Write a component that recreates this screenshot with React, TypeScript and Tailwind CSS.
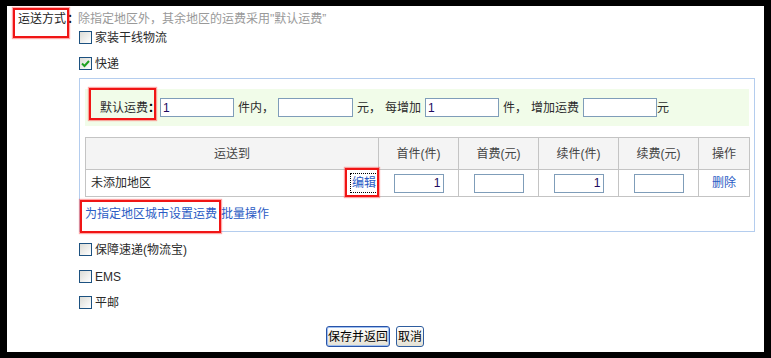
import React from 'react'

const Box = ({ checked }: { checked?: boolean }) => (
  <span className="relative w-[13px] h-[13px] border border-[#1c5180] bg-gradient-to-br from-[#dcdcd6] to-white shrink-0">
    {checked && (
      <svg className="absolute left-[1px] top-[1px]" width="9" height="9" viewBox="0 0 9 9">
        <path d="M1 4.5 L3.5 7 L8 2" stroke="#21a121" strokeWidth="2" fill="none" />
      </svg>
    )}
  </span>
)

const Option = ({ label, checked, className }: { label: string; checked?: boolean; className?: string }) => (
  <div className={`flex items-center h-[13px] ${className ?? ''}`}>
    <Box checked={checked} />
    <span className="ml-[3px] text-[12px] text-[#2b2b2b]">{label}</span>
  </div>
)

const Input = ({ value, w, right }: { value?: string; w: string; right?: boolean }) => (
  <input
    readOnly
    value={value ?? ''}
    className={`${w} h-[19px] border border-[#7f9db9] bg-white px-[2px] text-[12px] text-[#200a60] outline-none ${right ? 'text-right' : ''}`}
  />
)

// red marks drawn over the screenshot
const Mark = ({ cls }: { cls: string }) => (
  <div className={`absolute border-2 border-[#f01515] shadow-[0_0_1px_1px_rgba(255,60,60,0.45)] pointer-events-none ${cls}`} />
)

const App = () => {
  return (
    <div className="w-[771px] h-[358px] bg-black pt-[6px] pb-[6px] pl-[7px] pr-[7px] flex">
      <div className="relative flex-1 bg-white font-['Liberation_Sans','Noto_Sans_CJK_SC',sans-serif] text-[12px] text-[#2b2b2b]">
        {/* title */}
        <div className="flex items-center h-[25px] pl-[11px] pt-[1px]">
          <span className="text-[#222]">运送方式</span>
          <span className="font-bold text-black ml-[1px]">：</span>
          <span className="text-[#999] -ml-[1px]">除指定地区外，其余地区的运费采用"默认运费”</span>
        </div>

        <div className="pl-[72px]">
          <Option label="家装干线物流" />
          <Option label="快递" checked className="mt-[13px]" />

          {/* express settings */}
          <div className="mt-[8px] w-[676px] h-[154px] border border-[#b4cdee] px-[5px] pt-[10px]">
            <div className="h-[37px] bg-[#f1fce9] flex items-center pl-[15px]">
              <span>默认运费</span>
              <span className="font-bold text-black">：</span>
              <Input value="1" w="w-[74px]" />
              <span className="ml-[4px]">件内，</span>
              <span className="ml-[4px]" />
              <Input w="w-[75px]" />
              <span className="ml-[4px]">元，</span>
              <span className="ml-[4px]">每增加</span>
              <span className="ml-[4px]" />
              <Input value="1" w="w-[74px]" />
              <span className="ml-[4px]">件，</span>
              <span className="ml-[4px]">增加运费</span>
              <span className="ml-[4px]" />
              <Input w="w-[74px]" />
              <span>元</span>
            </div>

            <table className="mt-[11px] w-[664px] border-collapse table-fixed">
              <colgroup>
                <col className="w-[293px]" />
                <col className="w-[80px]" />
                <col className="w-[80px]" />
                <col className="w-[80px]" />
                <col className="w-[80px]" />
                <col className="w-[51px]" />
              </colgroup>
              <thead>
                <tr className="h-[32px] bg-[#f4f4f4]">
                  {['运送到', '首件(件)', '首费(元)', '续件(件)', '续费(元)', '操作'].map((h) => (
                    <th key={h} className="border border-[#c4c4c4] font-normal text-center p-0 text-[#444]">
                      {h}
                    </th>
                  ))}
                </tr>
              </thead>
              <tbody>
                <tr className="h-[27px]">
                  <td className="border border-[#c4c4c4] p-0">
                    <div className="flex items-center justify-between pl-[5px] pr-[1px]">
                      <span>未添加地区</span>
                      <span className="text-[#2a5bc4] outline-1 outline-dotted outline-black px-[1px] leading-[18px]">编辑</span>
                    </div>
                  </td>
                  <td className="border border-[#c4c4c4] p-0 text-center">
                    <Input value="1" w="w-[50px]" right />
                  </td>
                  <td className="border border-[#c4c4c4] p-0 text-center">
                    <Input w="w-[50px]" />
                  </td>
                  <td className="border border-[#c4c4c4] p-0 text-center">
                    <Input value="1" w="w-[50px]" right />
                  </td>
                  <td className="border border-[#c4c4c4] p-0 text-center">
                    <Input w="w-[50px]" />
                  </td>
                  <td className="border border-[#c4c4c4] p-0 text-center text-[#2a5bc4]">删除</td>
                </tr>
              </tbody>
            </table>

            <div className="flex items-center h-[34px] text-[#2a5bc4]">
              <span>为指定地区城市设置运费</span>
              <span className="ml-[4px]">批量操作</span>
            </div>
          </div>

          <Option label="保障速递(物流宝)" className="mt-[11px]" />
          <Option label="EMS" className="mt-[14px]" />
          <Option label="平邮" className="mt-[13px]" />
        </div>

        {/* buttons */}
        <div className="flex pl-[319px] mt-[17px] gap-[6px]">
          <button className="h-[21px] px-[1px] border border-[#2753a8] rounded-[3px] bg-gradient-to-b from-white to-[#e4e1d4] text-[12px] text-black shadow-[inset_0_0_0_1px_#9fbff0]">
            保存并返回
          </button>
          <button className="h-[21px] px-[1px] border border-[#2f5d9e] rounded-[3px] bg-gradient-to-b from-white to-[#e4e1d4] text-[12px] text-black">
            取消
          </button>
        </div>

        <Mark cls="left-[6px] top-[2px] w-[56px] h-[30px]" />
        <Mark cls="left-[82px] top-[82px] w-[67px] h-[32px]" />
        <Mark cls="left-[338px] top-[162px] w-[34px] h-[29px]" />
        <Mark cls="left-[73px] top-[194px] w-[141px] h-[33px]" />
      </div>
    </div>
  )
}

export default App
